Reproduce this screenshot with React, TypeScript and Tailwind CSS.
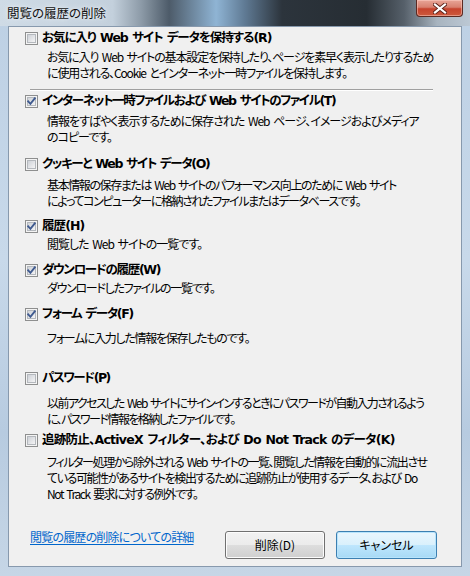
import React from "react";

type Item = {
  title: string;
  desc: string[];
  checked: boolean;
  mt: string;
  descMt: string;
  titleTrack: string;
  descTrack: string;
};

const items: Item[] = [
  {
    title: "お気に入り Web サイト データを保持する(R)",
    desc: [
      "お気に入り Web サイトの基本設定を保持したり、ページを素早く表示したりするため",
      "に使用される、Cookie とインターネット一時ファイルを保持します。",
    ],
    checked: false,
    mt: "mt-0",
    descMt: "mt-[3px]",
    titleTrack: "tracking-[-1.05px]",
    descTrack: "tracking-[-1.15px]",
  },
  {
    title: "インターネット一時ファイルおよび Web サイトのファイル(T)",
    desc: [
      "情報をすばやく表示するために保存された Web ページ、イメージおよびメディア",
      "のコピーです。",
    ],
    checked: true,
    mt: "mt-[2px]",
    descMt: "mt-[4px]",
    titleTrack: "tracking-[-1.35px]",
    descTrack: "tracking-[-1px]",
  },
  {
    title: "クッキーと Web サイト データ(O)",
    desc: [
      "基本情報の保存または Web サイトのパフォーマンス向上のために Web サイト",
      "によってコンピューターに格納されたファイルまたはデータベースです。",
    ],
    checked: false,
    mt: "mt-[11px]",
    descMt: "mt-[5px]",
    titleTrack: "tracking-[-1.3px]",
    descTrack: "tracking-[-1.4px]",
  },
  {
    title: "履歴(H)",
    desc: ["閲覧した Web サイトの一覧です。"],
    checked: true,
    mt: "mt-[9px]",
    descMt: "mt-[2px]",
    titleTrack: "tracking-[-0.9px]",
    descTrack: "tracking-[-1px]",
  },
  {
    title: "ダウンロードの履歴(W)",
    desc: ["ダウンロードしたファイルの一覧です。"],
    checked: true,
    mt: "mt-[10px]",
    descMt: "mt-[2px]",
    titleTrack: "tracking-[-1.3px]",
    descTrack: "tracking-[-1.3px]",
  },
  {
    title: "フォーム データ(F)",
    desc: ["フォームに入力した情報を保存したものです。"],
    checked: true,
    mt: "mt-[10px]",
    descMt: "mt-[8px]",
    titleTrack: "tracking-[-1.3px]",
    descTrack: "tracking-[-1.3px]",
  },
  {
    title: "パスワード(P)",
    desc: [
      "以前アクセスした Web サイトにサインインするときにパスワードが自動入力されるよう",
      "に、パスワード情報を格納したファイルです。",
    ],
    checked: false,
    mt: "mt-[24px]",
    descMt: "mt-[9px]",
    titleTrack: "tracking-[-1.45px]",
    descTrack: "tracking-[-1.55px]",
  },
  {
    title: "追跡防止、ActiveX フィルター、および Do Not Track のデータ(K)",
    desc: [
      "フィルター処理から除外される Web サイトの一覧、閲覧した情報を自動的に流出させ",
      "ている可能性があるサイトを検出するために追跡防止が使用するデータ、および Do",
      "Not Track 要求に対する例外です。",
    ],
    checked: false,
    mt: "mt-[5px]",
    descMt: "mt-[6px]",
    titleTrack: "tracking-[-0.75px]",
    descTrack: "tracking-[-1.4px]",
  },
];

function Checkbox({ checked }: { checked: boolean }) {
  return (
    <svg width="13" height="13" viewBox="0 0 13 13" className="shrink-0">
      <defs>
        <linearGradient id="cbInner" x1="0" y1="0" x2="1" y2="1">
          <stop offset="0" stopColor="#cbcfd5" />
          <stop offset="1" stopColor="#f7f7f7" />
        </linearGradient>
      </defs>
      <rect x="0.5" y="0.5" width="12" height="12" fill="#f4f4f4" stroke="#8e8f8f" />
      <rect x="2.5" y="2.5" width="8" height="8" fill="url(#cbInner)" stroke="#b4b8bd" />
      {checked && (
        <path
          d="M3.2 6.4 L5.4 8.8 L9.8 3.4"
          fill="none"
          stroke="#3f5a8f"
          strokeWidth="1.9"
          strokeLinecap="square"
        />
      )}
    </svg>
  );
}

function CloseButton() {
  return (
    <div className="absolute top-0 right-[7px] w-[47px] h-[17px] rounded-b-[4px] border border-t-0 border-[#5b2a22] bg-[linear-gradient(to_bottom,#e8a597_0%,#d8806f_45%,#c6432d_55%,#cc5a3e_100%)] flex items-center justify-center shadow-[inset_0_0_0_1px_rgba(255,210,200,0.5)]">
      <svg width="14" height="11" viewBox="0 0 14 11">
        <path d="M2 1.5 L12 9.5 M12 1.5 L2 9.5" stroke="#5a2018" strokeWidth="4" strokeLinecap="square" />
        <path d="M2 1.5 L12 9.5 M12 1.5 L2 9.5" stroke="#ffffff" strokeWidth="2.2" strokeLinecap="square" />
      </svg>
    </div>
  );
}

export default function App() {
  return (
    <div className="relative w-[470px] h-[576px] overflow-hidden bg-[linear-gradient(to_bottom,#bdd0e4,#c8d9ea_45%,#b7cbe0_75%,#c6d6e6)] font-['Noto_Sans_CJK_JP','Noto_Sans',sans-serif] [font-feature-settings:'palt'] text-black">
      {/* title bar */}
      <div className="h-[26px] flex items-center px-[7px] bg-[linear-gradient(to_right,#cfdbe6_0%,#c3d0dc_24%,#8d9ba8_30%,#4d5b69_36%,#8fb4d4_46%,#607b95_52%,#2c343c_60%,#262d33_78%,#56606a_86%,#a8b4bf_93%,#bcc8d4_100%)]">
        <span className="text-[12.5px] leading-4 text-[#111] [text-shadow:0_0_6px_#e8eef4,0_0_3px_#e8eef4]">閲覧の履歴の削除</span>
      </div>
      <CloseButton />

      {/* client area */}
      <div className="mx-[8px] h-[541px] border border-[#8799ad] bg-[#f0f0f0] pl-[16px] pt-[3px]">
        {items.map((item, i) => (
          <React.Fragment key={i}>
            <div className={item.mt}>
              <div className="flex items-center gap-[4px] h-4">
                <Checkbox checked={item.checked} />
                <span
                  className={`${item.titleTrack} font-['DejaVu_Sans','Noto_Sans_CJK_JP',sans-serif] text-[12.5px] font-bold leading-4 [word-spacing:1px] whitespace-nowrap`}
                >
                  {item.title}
                </span>
              </div>
              <div className={`${item.descMt} ${item.descTrack} pl-[22px] text-[12px] leading-4 [word-spacing:2px] whitespace-nowrap`}>
                {item.desc.map((line, j) => (
                  <div key={j}>{line}</div>
                ))}
              </div>
            </div>
            {i === 0 && (
              <div className="mt-[8px] ml-[5px] w-[403px] h-[2px] border-t border-b border-t-[#a0a0a0] border-b-white" />
            )}
          </React.Fragment>
        ))}

        {/* bottom row */}
        <div className="mt-[27px] flex items-start">
          <div className="w-[200px] pl-[5px] text-[12px] leading-4">
            <span className="text-[#0066cc] underline underline-offset-2 tracking-[-0.8px] whitespace-nowrap">
              閲覧の履歴の削除についての詳細
            </span>
          </div>
          <div className="mt-[2px] flex gap-[11px]">
            <button className="w-[100px] h-[28px] rounded-[3px] border border-[#707070] bg-[linear-gradient(to_bottom,#f2f2f2_0%,#ebebeb_50%,#dddddd_51%,#cfcfcf_100%)] shadow-[inset_0_0_0_1px_#fcfcfc] text-[12px]">
              削除(D)
            </button>
            <button className="w-[101px] h-[28px] rounded-[3px] border border-[#3c7fb1] bg-[linear-gradient(to_bottom,#eaf6fd_0%,#d9f0fc_50%,#bee6fd_51%,#a7d9f5_100%)] shadow-[inset_0_0_0_1px_#b8e4fc] text-[12px]">
              キャンセル
            </button>
          </div>
        </div>
      </div>
    </div>
  );
}
